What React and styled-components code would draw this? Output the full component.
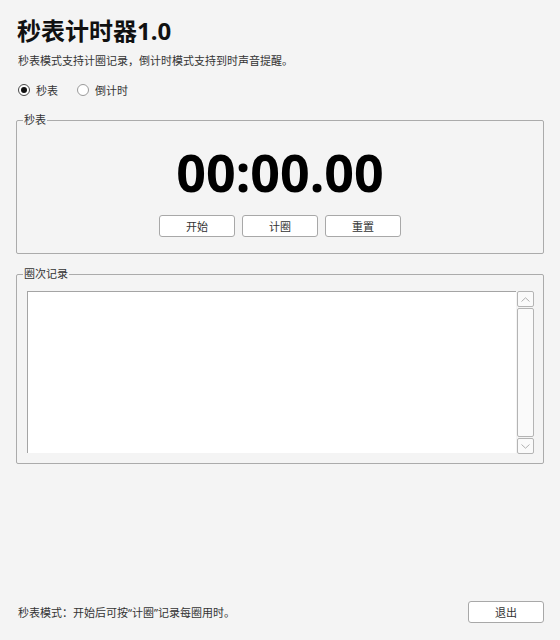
import styled, { createGlobalStyle } from "styled-components";

const GlobalStyle = createGlobalStyle`
  html, body {
    margin: 0;
    padding: 0;
    background: #f4f4f4;
  }
  body {
    font-family: "Noto Sans", "Noto Sans CJK SC", sans-serif;
    color: #1e1e1e;
  }
`;

const Page = styled.div`
  width: 560px;
  height: 640px;
  box-sizing: border-box;
  padding: 14px 16px 0 16px;
  display: flex;
  flex-direction: column;
`;

const Title = styled.h1`
  margin: 0;
  padding-left: 1px;
  font-size: 24px;
  line-height: 34px;
  font-weight: 700;
  color: #111;
`;

const Subtitle = styled.p`
  margin: 5px 0 0 0;
  padding-left: 2px;
  font-size: 11px;
  line-height: 16px;
  color: #333;
`;

const ModeRow = styled.div`
  margin-top: 13px;
  padding-left: 2px;
  display: flex;
  align-items: center;
  gap: 19px;
  height: 16px;
`;

const RadioLabel = styled.label`
  display: flex;
  align-items: center;
  gap: 6px;
  font-size: 11px;
  color: #333;
`;

const RadioDot = styled.span`
  width: 12px;
  height: 12px;
  box-sizing: border-box;
  border-radius: 50%;
  border: 1px solid ${(p) => (p.$checked ? "#4a4a4a" : "#9a9a9a")};
  background: #fff;
  display: flex;
  align-items: center;
  justify-content: center;

  &::after {
    content: "";
    width: 6px;
    height: 6px;
    border-radius: 50%;
    background: ${(p) => (p.$checked ? "#111" : "transparent")};
  }
`;

const Group = styled.fieldset`
  margin: ${(p) => p.$gap}px 0 0 0;
  min-width: 0;
  border: 1px solid #ababab;
  border-radius: 2px;
  padding: ${(p) => p.$pad};
`;

const GroupLabel = styled.legend`
  margin-left: -4px;
  padding: 0 1px;
  font-size: 11px;
  line-height: 14px;
  color: #333;
`;

const Clock = styled.div`
  text-align: center;
  font-family: "Noto Sans", sans-serif;
  font-weight: 700;
  font-size: 52px;
  line-height: 1;
  color: #000;
`;

const ButtonRow = styled.div`
  margin-top: 17px;
  display: flex;
  justify-content: center;
  gap: 7px;
`;

const Button = styled.button`
  width: 76px;
  height: 22px;
  box-sizing: border-box;
  border: 1px solid #a8a8a8;
  border-radius: 3px;
  background: #fff;
  font-family: "Noto Sans CJK SC", sans-serif;
  font-size: 11px;
  color: #333;
  padding: 0;
`;

const ListFrame = styled.div`
  display: flex;
  gap: 1px;
  height: 163px;
`;

const ListArea = styled.div`
  flex: 1;
  background: #fff;
  border-top: 1px solid #a4a4a4;
  border-left: 1px solid #a4a4a4;
  margin-bottom: 1px;
`;

const ScrollBar = styled.div`
  width: 17px;
  display: flex;
  flex-direction: column;
  gap: 1px;
`;

const ScrollButton = styled.div`
  height: 16px;
  box-sizing: border-box;
  border: 1px solid #b4b4b4;
  border-radius: 2px;
  background: #fafafa;
  display: flex;
  align-items: center;
  justify-content: center;
`;

const ScrollTrack = styled.div`
  flex: 1;
  box-sizing: border-box;
  border: 1px solid #b4b4b4;
  border-radius: 2px;
  background: #fafafa;
`;

const Footer = styled.div`
  margin-top: auto;
  padding: 0 0 17px 2px;
  display: flex;
  align-items: center;
  justify-content: space-between;
`;

const Hint = styled.span`
  font-size: 11px;
  color: #333;
`;

const Chevron = ({ up }) => (
  <svg width="9" height="5" viewBox="0 0 9 5">
    <path
      d={up ? "M0.5 4.5 L4.5 0.8 L8.5 4.5" : "M0.5 0.5 L4.5 4.2 L8.5 0.5"}
      fill="none"
      stroke="#b0b0b0"
      strokeWidth="1"
    />
  </svg>
);

export default function App() {
  return (
    <>
      <GlobalStyle />
      <Page>
        <Title>秒表计时器1.0</Title>
        <Subtitle>秒表模式支持计圈记录，倒计时模式支持到时声音提醒。</Subtitle>
        <ModeRow>
          <RadioLabel>
            <RadioDot $checked />
            秒表
          </RadioLabel>
          <RadioLabel>
            <RadioDot />
            倒计时
          </RadioLabel>
        </ModeRow>

        <Group $gap={15} $pad="19px 10px 16px 10px">
          <GroupLabel>秒表</GroupLabel>
          <Clock>00:00.00</Clock>
          <ButtonRow>
            <Button>开始</Button>
            <Button>计圈</Button>
            <Button>重置</Button>
          </ButtonRow>
        </Group>

        <Group $gap={13} $pad="10px 9px 9px 10px">
          <GroupLabel>圈次记录</GroupLabel>
          <ListFrame>
            <ListArea />
            <ScrollBar>
              <ScrollButton>
                <Chevron up />
              </ScrollButton>
              <ScrollTrack />
              <ScrollButton>
                <Chevron />
              </ScrollButton>
            </ScrollBar>
          </ListFrame>
        </Group>

        <Footer>
          <Hint>秒表模式：开始后可按“计圈”记录每圈用时。</Hint>
          <Button>退出</Button>
        </Footer>
      </Page>
    </>
  );
}
